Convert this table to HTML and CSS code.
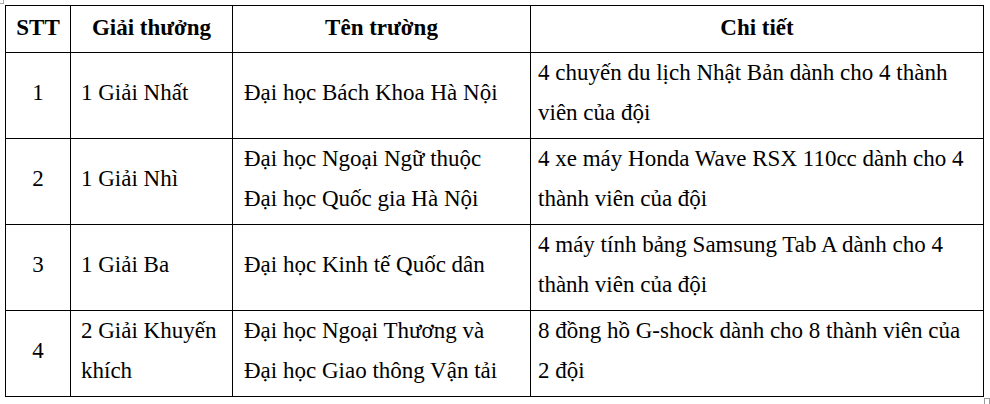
FILE: index.html
```html
<!DOCTYPE html>
<html lang="vi">
<head>
<meta charset="utf-8">
<link rel="stylesheet" href="styles.css">
</head>
<body>
<div class="page">
  <span class="handle-tl"></span>
  <table class="prizes">
    <colgroup>
      <col class="c1"><col class="c2"><col class="c3"><col class="c4">
    </colgroup>
    <thead>
      <tr>
        <th>STT</th>
        <th>Giải thưởng</th>
        <th>Tên trường</th>
        <th>Chi tiết</th>
      </tr>
    </thead>
    <tbody>
      <tr>
        <td class="num">1</td>
        <td class="prize">1 Giải Nhất</td>
        <td class="school">Đại học Bách Khoa Hà Nội</td>
        <td class="detail">4 chuyến du lịch Nhật Bản dành cho 4 thành viên của đội</td>
      </tr>
      <tr>
        <td class="num">2</td>
        <td class="prize">1 Giải Nhì</td>
        <td class="school">Đại học Ngoại Ngữ thuộc Đại học Quốc gia Hà Nội</td>
        <td class="detail">4 xe máy Honda Wave RSX 110cc dành cho 4 thành viên của đội</td>
      </tr>
      <tr>
        <td class="num">3</td>
        <td class="prize">1 Giải Ba</td>
        <td class="school">Đại học Kinh tế Quốc dân</td>
        <td class="detail">4 máy tính bảng Samsung Tab A dành cho 4 thành viên của đội</td>
      </tr>
      <tr>
        <td class="num">4</td>
        <td class="prize">2 Giải Khuyến khích</td>
        <td class="school">Đại học Ngoại Thương và Đại học Giao thông Vận tải</td>
        <td class="detail">8 đồng hồ G-shock dành cho 8 thành viên của 2 đội</td>
      </tr>
    </tbody>
  </table>
  <span class="handle-br"></span>
</div>
</body>
</html>
```
FILE: styles.css
```css
html, body {
  margin: 0;
  padding: 0;
  background: #fff;
}
.page {
  position: relative;
  width: 990px;
  height: 404px;
  padding: 5px 0 0 5px;
  box-sizing: border-box;
  font-family: "Liberation Serif", "Times New Roman", serif;
  font-size: 23px;
  color: #000;
}
.prizes {
  border-collapse: collapse;
  table-layout: fixed;
  width: 978px;
  font-family: "Liberation Serif", "Times New Roman", serif;
}
.c1 { width: 65px; }
.c2 { width: 162px; }
.c3 { width: 298px; }
.c4 { width: 453px; }
.prizes th, .prizes td {
  border: 1px solid #000;
  line-height: 40px;
  text-align: left;
  vertical-align: middle;
  font-weight: normal;
  font-family: "Liberation Serif", "Times New Roman", serif;
}
.prizes th {
  font-weight: bold;
  text-align: center;
  padding: 2px 0 4px;
  height: 40px;
}
.prizes td {
  padding: 0 6px 5px 10px;
  height: 80px;
}
.prizes td.num {
  text-align: center;
  padding-left: 0;
  padding-right: 0;
}
.prizes td.detail {
  padding-left: 7px;
}
.prizes td.school {
  padding-left: 11px;
  padding-right: 16px;
}
.handle-tl {
  position: absolute;
  left: 0;
  top: 0;
  width: 3px;
  height: 3px;
  border-right: 1px solid #aaa;
  border-bottom: 1px solid #aaa;
}
.handle-br {
  position: absolute;
  left: 984px;
  top: 398px;
  width: 4px;
  height: 6px;
  border: 1px solid #999;
  border-bottom: none;
}
```
